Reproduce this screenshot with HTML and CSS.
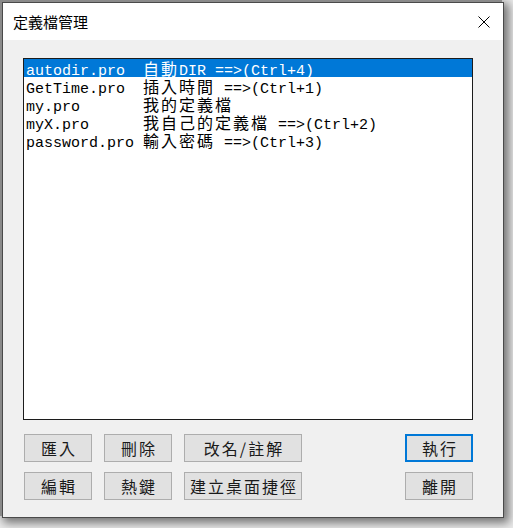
FILE: index.html
```html
<!DOCTYPE html>
<html lang="zh-Hant">
<head>
<meta charset="utf-8">
<title>定義檔管理</title>
<link rel="stylesheet" href="styles.css">
</head>
<body>
<div class="win">
  <div class="titlebar">
    <span class="title">定義檔管理</span>
    <span class="close" aria-label="關閉">
      <svg width="12" height="12" viewBox="0 0 12 12"><path d="M0.5 0.5 L11.5 11.5 M11.5 0.5 L0.5 11.5" stroke="#000" stroke-width="1" fill="none"/></svg>
    </span>
  </div>
  <div class="client">
    <div class="list">
      <div class="row sel">autodir.pro  <span class="cj">自動</span>DIR ==&gt;(Ctrl+4)</div>
      <div class="row">GetTime.pro  <span class="cj">插入時間</span> ==&gt;(Ctrl+1)</div>
      <div class="row">my.pro       <span class="cj">我的定義檔</span></div>
      <div class="row">myX.pro      <span class="cj">我自己的定義檔</span> ==&gt;(Ctrl+2)</div>
      <div class="row">password.pro <span class="cj">輸入密碼</span> ==&gt;(Ctrl+3)</div>
    </div>
    <div class="buttons">
      <button class="btn">匯入</button>
      <button class="btn">刪除</button>
      <button class="btn">改名/註解</button>
      <span class="spacer"></span>
      <button class="btn default">執行</button>
      <button class="btn">編輯</button>
      <button class="btn">熱鍵</button>
      <button class="btn">建立桌面捷徑</button>
      <span class="spacer"></span>
      <button class="btn">離開</button>
    </div>
  </div>
</div>
</body>
</html>
```

FILE: styles.css
```css
html, body {
  margin: 0;
  padding: 0;
}
body {
  background: #ebebeb;
  width: 513px;
  height: 528px;
  overflow: hidden;
}
.win {
  margin: 2px 0 0 2px;
  width: 502px;
  height: 516px;
  box-sizing: border-box;
  border: 1px solid #4a4a4a;
  background: #f0f0f0;
  display: flex;
  flex-direction: column;
  box-shadow: -2px -2px 0 0 #8a8a8a, 3px 3px 9px 2px rgba(0, 0, 0, 0.5);
}
.titlebar {
  height: 37px;
  flex: none;
  background: #ffffff;
  display: flex;
  align-items: center;
  justify-content: space-between;
  padding: 0 13px 0 10px;
}
.title {
  font-family: "Noto Sans CJK TC", sans-serif;
  font-size: 15px;
  color: #000;
  line-height: 1;
}
.close {
  display: flex;
  width: 12px;
  height: 12px;
}
.client {
  flex: 1;
  padding: 18px 0 0 20px;
}
.list {
  width: 450px;
  height: 362px;
  box-sizing: border-box;
  border: 1px solid #1c1c1c;
  background: #fff;
  font-family: "Liberation Mono", monospace;
  font-size: 15px;
  line-height: 18px;
  color: #000;
}
.row {
  height: 18px;
  white-space: pre;
  padding-left: 2px;
}
.row.sel {
  background: #0078d7;
  color: #fff;
}
.cj {
  font-family: "Noto Sans CJK TC", sans-serif;
  font-size: 16px;
  letter-spacing: 2px;
}
.buttons {
  margin-top: 14px;
  padding-left: 1px;
  width: 449px;
  display: grid;
  grid-template-columns: 68px 68px 118px 1fr 68px;
  grid-auto-rows: 28px;
  column-gap: 12px;
  row-gap: 10px;
}
.btn {
  margin: 0;
  padding: 0 0 0 2px;
  box-sizing: border-box;
  height: 28px;
  border: 1px solid #adadad;
  background: #e1e1e1;
  color: #1a1a1a;
  font-family: "Noto Sans CJK TC", sans-serif;
  font-size: 16px;
  letter-spacing: 2px;
  line-height: 1;
  white-space: nowrap;
}
.btn.default {
  border: 2px solid #0078d7;
}
```
